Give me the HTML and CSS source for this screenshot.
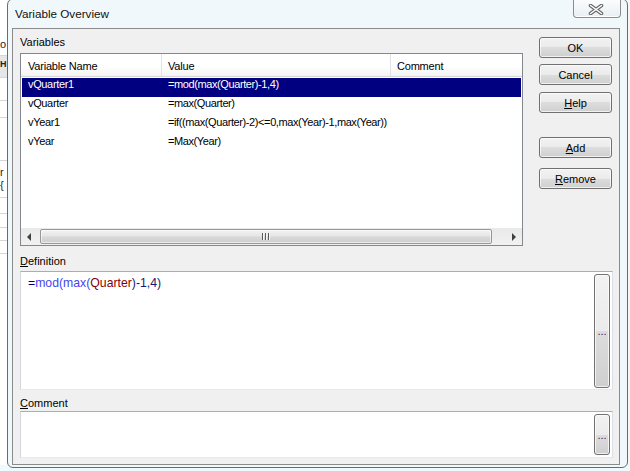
FILE: index.html
```html
<!DOCTYPE html>
<html>
<head>
<meta charset="utf-8">
<title>Variable Overview</title>
<link rel="stylesheet" href="styles.css">
</head>
<body>
<div class="desktop">
  <div class="bg-left">
    <div class="cell h56"><span class="frag f-o">o</span></div>
    <div class="cell h22 shade"><span class="frag f-h">H</span></div>
    <div class="cell h23"></div>
    <div class="cell h17"></div>
    <div class="cell h43"></div>
    <div class="cell h37"><span class="frag f-r">r</span><span class="frag f-b">{</span></div>
    <div class="cell h16"></div>
    <div class="cell h14"></div>
    <div class="cell h13"></div>
    <div class="cell h13"></div>
  </div>

  <div class="window">
    <div class="titlebar">
      <div class="title">Variable Overview</div>
      <div class="close">
        <svg width="16" height="11" viewBox="0 0 16 11">
          <path d="M2.5 1.5 L13.5 9.5 M13.5 1.5 L2.5 9.5" stroke="#666666" stroke-width="3.6" stroke-linecap="round" fill="none"/>
          <path d="M2.5 1.5 L13.5 9.5 M13.5 1.5 L2.5 9.5" stroke="#ffffff" stroke-width="1.5" stroke-linecap="round" fill="none"/>
        </svg>
      </div>
    </div>

    <div class="panel">
      <div class="top">
        <div class="vars">
          <div class="label vars-label">Variables</div>
          <div class="listbox">
            <div class="header">
              <div class="hcell c-name">Variable Name</div>
              <div class="hcell c-value">Value</div>
              <div class="hcell c-comment">Comment</div>
            </div>
            <div class="rows">
              <div class="row selected"><div class="cell-name">vQuarter1</div><div class="cell-value">=mod(max(Quarter)-1,4)</div></div>
              <div class="row"><div class="cell-name">vQuarter</div><div class="cell-value">=max(Quarter)</div></div>
              <div class="row"><div class="cell-name">vYear1</div><div class="cell-value">=if((max(Quarter)-2)&lt;=0,max(Year)-1,max(Year))</div></div>
              <div class="row"><div class="cell-name">vYear</div><div class="cell-value">=Max(Year)</div></div>
            </div>
            <div class="hscroll">
              <div class="arrow">
                <svg width="5" height="8" viewBox="0 0 5 8"><polygon points="4,0 0,4 4,8" fill="#404040"/></svg>
              </div>
              <div class="track">
                <div class="thumb">
                  <svg width="8" height="7" viewBox="0 0 8 7">
                    <rect x="0" y="0" width="1" height="7" fill="#5a5a5a"/>
                    <rect x="1" y="0" width="1" height="7" fill="#f4f4f4"/>
                    <rect x="3" y="0" width="1" height="7" fill="#5a5a5a"/>
                    <rect x="4" y="0" width="1" height="7" fill="#f4f4f4"/>
                    <rect x="6" y="0" width="1" height="7" fill="#5a5a5a"/>
                    <rect x="7" y="0" width="1" height="7" fill="#f4f4f4"/>
                  </svg>
                </div>
              </div>
              <div class="arrow">
                <svg width="5" height="8" viewBox="0 0 5 8"><polygon points="1,0 5,4 1,8" fill="#404040"/></svg>
              </div>
            </div>
          </div>
        </div>
        <div class="buttons">
          <div class="btn b-ok">OK</div>
          <div class="btn b-cancel">Cancel</div>
          <div class="btn b-help"><u>H</u>elp</div>
          <div class="btn b-add"><u>A</u>dd</div>
          <div class="btn b-remove"><u>R</u>emove</div>
        </div>
      </div>

      <div class="label def-label"><u>D</u>efinition</div>
      <div class="textbox def-box">
        <div class="textcontent"><span class="op">=</span><span class="fn">mod(max(</span><span class="field">Quarter</span><span class="rest">)-1,4)</span></div>
        <div class="dots def-dots">...</div>
      </div>

      <div class="label com-label"><u>C</u>omment</div>
      <div class="textbox com-box">
        <div class="textcontent"></div>
        <div class="dots com-dots">...</div>
      </div>
    </div>
  </div>

  <div class="bg-right"></div>
</div>
</body>
</html>
```

FILE: styles.css
```css
* {
  box-sizing: border-box;
}

html,
body {
  margin: 0;
  padding: 0;
}

body {
  width: 630px;
  height: 471px;
  overflow: hidden;
  background: #eefafd;
  font-family: "Liberation Sans", Arial, sans-serif;
  font-size: 11px;
  color: #000;
}

.desktop {
  display: flex;
  align-items: flex-start;
  height: 471px;
}

/* background application peeking out on the left */
.bg-left {
  width: 7px;
  flex: none;
  height: 465px;
  background: #ffffff;
  overflow: hidden;
  display: flex;
  flex-direction: column;
}

.bg-left .cell {
  flex: none;
  border-bottom: 1px solid #d6d6d6;
  white-space: nowrap;
  font-size: 11px;
  line-height: 12px;
}

.bg-left .shade {
  background: #e6e6e6;
}

.h56 { height: 56px; padding-top: 38px; }
.h22 { height: 22px; padding-top: 2px; }
.h23 { height: 23px; }
.h17 { height: 17px; }
.h43 { height: 43px; }
.h37 { height: 37px; padding-top: 5px; }
.h16 { height: 16px; }
.h14 { height: 14px; }
.h13 { height: 13px; }

.frag {
  display: block;
  color: #222;
}

.f-h {
  font-weight: bold;
  font-size: 9px;
}

.f-b {
  margin-top: 1px;
}

.bg-right {
  width: 2px;
  flex: none;
  height: 467px;
  background: #f6f6f6;
}

/* window */
.window {
  width: 621px;
  flex: none;
  height: 470px;
  margin-top: -2px;
  border: 1px solid #6b6b6b;
  border-radius: 7px 7px 6px 6px;
  background: #f1f8fb;
  display: flex;
  flex-direction: column;
}

.titlebar {
  height: 29px;
  flex: none;
  display: flex;
  justify-content: space-between;
  align-items: flex-start;
}

.title {
  margin: 8px 0 0 7px;
  line-height: 13px;
  font-size: 11.7px;
  color: #111;
}

.close {
  width: 48px;
  height: 19px;
  margin-right: 6px;
  border: 1px solid #8c8c8c;
  border-top: none;
  border-radius: 0 0 4px 4px;
  background: linear-gradient(#fcfdfe, #e9eff3);
  box-shadow: inset 0 -1px 0 #ffffff;
  display: flex;
  align-items: center;
  justify-content: center;
  padding: 2px 3px 0 0;
}

/* dialog panel */
.panel {
  margin: 0 7px 2px 4px;
  height: 437px;
  flex: none;
  border: 1px solid #8b8b8b;
  background: #f0f0f0;
  padding: 7px 6px 6px 7px;
  display: flex;
  flex-direction: column;
}

.label {
  height: 13px;
  line-height: 13px;
  flex: none;
}

.top {
  display: flex;
  justify-content: space-between;
  flex: none;
}

.vars {
  width: 503px;
}

.vars-label {
  margin-bottom: 4px;
}

.listbox {
  height: 193px;
  border: 1px solid #828790;
  background: #ffffff;
  display: flex;
  flex-direction: column;
}

.header {
  height: 23px;
  flex: none;
  display: flex;
  border-bottom: 1px solid #d5d5d5;
  background: linear-gradient(#ffffff 0%, #ffffff 55%, #f3f3f3 100%);
}

.hcell {
  padding-top: 6px;
  line-height: 12px;
  white-space: nowrap;
  letter-spacing: -0.2px;
  color: #000;
}

.c-name {
  width: 141px;
  padding-left: 7px;
  border-right: 1px solid #e2e2e2;
}

.c-value {
  width: 229px;
  padding-left: 6px;
  border-right: 1px solid #e2e2e2;
}

.c-comment {
  flex: 1;
  padding-left: 6px;
}

.rows {
  flex: 1;
  margin-top: 1px;
}

.row {
  height: 19px;
  margin: 0 1px;
  display: flex;
  line-height: 12px;
  white-space: nowrap;
}

.row.selected {
  background: #000080;
  color: #ffffff;
}

.cell-name {
  width: 140px;
  padding-left: 6px;
  letter-spacing: -0.35px;
}

.cell-value {
  width: 229px;
  padding-left: 6px;
  letter-spacing: -0.4px;
}

.hscroll {
  height: 17px;
  flex: none;
  display: flex;
  background: linear-gradient(#e9e9e9, #f1f1f1);
}

.arrow {
  width: 17px;
  flex: none;
  display: flex;
  align-items: center;
  justify-content: center;
}

.track {
  flex: 1;
  display: flex;
  align-items: center;
}

.thumb {
  margin-left: 2px;
  width: 452px;
  height: 15px;
  border: 1px solid #979797;
  border-radius: 2px;
  background: linear-gradient(#f3f3f3 0%, #e6e6e6 45%, #d8d8d8 55%, #cfcfcf 100%);
  box-shadow: inset 0 0 0 1px rgba(255, 255, 255, 0.6);
  display: flex;
  align-items: center;
  justify-content: center;
}

.buttons {
  width: 73px;
  margin-right: 1px;
  padding-top: 1px;
  display: flex;
  flex-direction: column;
}

.btn {
  height: 21px;
  flex: none;
  border: 1px solid #707070;
  border-radius: 3px;
  background: linear-gradient(#f2f2f2 0%, #ebebeb 50%, #dddddd 50%, #cfcfcf 100%);
  box-shadow: inset 0 0 0 1px rgba(255, 255, 255, 0.7);
  display: flex;
  align-items: center;
  justify-content: center;
  line-height: 12px;
}

.b-cancel { margin-top: 6px; }
.b-help { margin-top: 7px; }
.b-add { margin-top: 24px; }
.b-remove { margin-top: 10px; }

.def-label {
  margin-top: 9px;
  margin-bottom: 3px;
}

.com-label {
  margin-top: 7px;
  margin-bottom: 1px;
}

.textbox {
  flex: none;
  display: flex;
  background: #ffffff;
  border-style: solid;
  border-width: 1px;
  border-color: #abadb3 #dbdfe6 #e3e9ef #d3d6dc;
  padding: 2px 2px 1px 7px;
}

.def-box {
  height: 119px;
}

.com-box {
  height: 47px;
}

.textcontent {
  flex: 1;
  padding-top: 3px;
  font-size: 12.25px;
  line-height: 13px;
  white-space: nowrap;
}

.op { color: #00007a; }
.fn { color: #4646ee; }
.field { color: #860000; }
.rest { color: #1a1a72; }

.dots {
  width: 16px;
  flex: none;
  align-self: flex-start;
  border: 1px solid #707070;
  border-radius: 3px;
  background: linear-gradient(#f2f2f2 0%, #ebebeb 50%, #dddddd 50%, #cfcfcf 100%);
  box-shadow: inset 0 0 0 1px rgba(255, 255, 255, 0.7);
  display: flex;
  align-items: center;
  justify-content: center;
  line-height: 12px;
  font-size: 11px;
  color: #302060;
}

.def-dots {
  height: 114px;
}

.com-dots {
  height: 41px;
}
```
